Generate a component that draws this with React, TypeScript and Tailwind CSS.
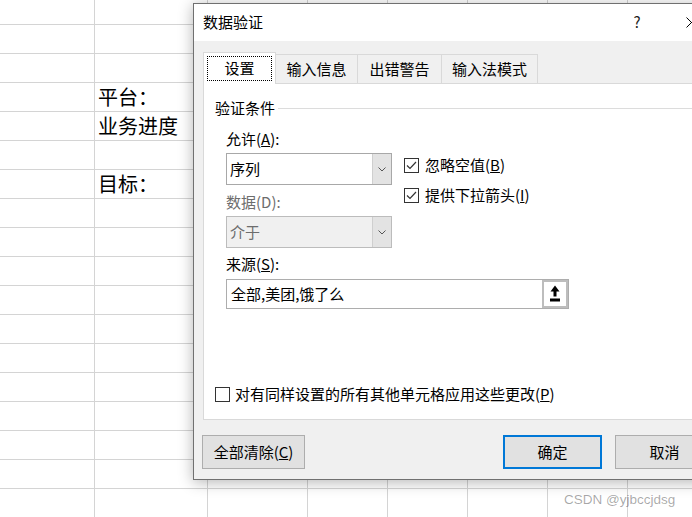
import type { ReactNode } from "react";

const CJK = "font-['Noto_Sans_CJK_SC','Noto_Sans',sans-serif]";

const COLS = ["w-[95px]", "w-[113px]", "w-[100px]", "w-[80px]", "w-[80px]", "w-[80px]", "w-[80px]", "w-[80px]"];
const CELLS: Record<string, string> = { "3-1": "平台：", "4-1": "业务进度", "6-1": "目标：" };

function Sheet() {
  return (
    <div className="flex flex-col">
      {Array.from({ length: 18 }, (_, r) => (
        <div key={r} className={`flex ${r === 0 ? "h-[25px]" : "h-[29px]"}`}>
          {COLS.map((w, c) => (
            <div
              key={c}
              className={`${w} flex shrink-0 items-center border-r border-b border-[#d4d4d4] pl-[3px] text-[20px] leading-none text-black`}
            >
              {CELLS[`${r}-${c}`]}
            </div>
          ))}
        </div>
      ))}
    </div>
  );
}

function Check({ checked }: { checked?: boolean }) {
  return (
    <span className="flex h-[15px] w-[15px] shrink-0 items-center justify-center border border-[#333] bg-white">
      {checked && (
        <svg width="11" height="9" viewBox="0 0 11 9">
          <path d="M1 4.5 L4 7.5 L10 1" fill="none" stroke="#333" strokeWidth="1.2" />
        </svg>
      )}
    </span>
  );
}

function Chevron() {
  return (
    <svg width="8" height="5" viewBox="0 0 8 5">
      <path d="M0.5 0.5 L4 4 L7.5 0.5" fill="none" stroke="#555" strokeWidth="1" />
    </svg>
  );
}

function Combo({ value, disabled }: { value: string; disabled?: boolean }) {
  return (
    <div
      className={`flex h-[32px] w-[166px] border ${
        disabled ? "border-[#bcbcbc] bg-[#f0f0f0] text-[#6d6d6d]" : "border-[#a8a8a8] bg-white text-black"
      }`}
    >
      <span className="flex flex-1 items-center pl-[3px]">{value}</span>
      <span className="flex w-[19px] items-center justify-center border-l border-[#cfcfcf] bg-[#e3e3e3]">
        <Chevron />
      </span>
    </div>
  );
}

function Label({ children, muted }: { children: ReactNode; muted?: boolean }) {
  return <div className={`h-[20px] leading-[20px] ${muted ? "text-[#6d6d6d]" : "text-black"}`}>{children}</div>;
}

function Btn({ children, primary, w }: { children: ReactNode; primary?: boolean; w: string }) {
  return (
    <button
      type="button"
      className={`${w} h-[34px] shrink-0 bg-[#e1e1e1] text-black ${
        primary ? "border-2 border-[#0078d7]" : "border border-[#adadad]"
      }`}
    >
      {children}
    </button>
  );
}

function Dialog() {
  return (
    <div className="absolute left-[193px] top-[3px] flex h-[477px] w-[530px] flex-col border border-[#707070] bg-[#f0f0f0] text-[15px] shadow-[0_2px_14px_rgba(0,0,0,0.3)]">
      {/* title bar */}
      <div className="flex h-[37px] shrink-0 items-center bg-white pl-[9px]">
        <span className="text-black">数据验证</span>
        <div className="ml-auto mr-[8px] flex items-center gap-[8px]">
          <span className="w-[46px] text-center text-[#222]">?</span>
          <span className="flex w-[46px] justify-center">
            <svg width="11" height="11" viewBox="0 0 11 11">
              <path d="M0.5 0.5 L10.5 10.5 M10.5 0.5 L0.5 10.5" stroke="#000" strokeWidth="1" />
            </svg>
          </span>
        </div>
      </div>

      {/* tabs */}
      <div className="mt-[11px] flex h-[31px] items-end pl-[9px]">
        <div className="relative z-10 -mb-px flex h-[32px] w-[73px] items-center justify-center border-x border-t border-[#d9d9d9] bg-white">
          <span className="absolute inset-x-[3px] top-[3px] bottom-[3px] border border-dotted border-black" />
          设置
        </div>
        <div className="flex h-[29px] w-[82px] items-center justify-center border-t border-r border-[#d9d9d9]">输入信息</div>
        <div className="flex h-[29px] w-[84px] items-center justify-center border-t border-r border-[#d9d9d9]">出错警告</div>
        <div className="flex h-[29px] w-[96px] items-center justify-center border-t border-r border-[#d9d9d9]">输入法模式</div>
      </div>

      {/* panel */}
      <div className="mx-[9px] flex h-[337px] shrink-0 flex-col border border-[#d9d9d9] bg-white">
        <div className="flex items-center pl-[11px] pt-[14px]">
          <span className="leading-[20px] text-black">验证条件</span>
          <span className="ml-[3px] h-px flex-1 bg-[#dcdcdc]" />
        </div>

        <div className="mt-[11px] pl-[22px]">
          <Label>
            允许(<u>A</u>):
          </Label>
          <div className="mt-[4px] flex">
            <div className="flex w-[166px] flex-col">
              <Combo value="序列" />
              <div className="mt-[7px]">
                <Label muted>数据(D):</Label>
              </div>
              <div className="mt-[4px]">
                <Combo value="介于" disabled />
              </div>
            </div>
            <div className="ml-[12px] flex flex-col gap-[10px] pt-[2px]">
              <div className="flex h-[20px] items-center gap-[6px] text-black">
                <Check checked />
                <span>
                  忽略空值(<u>B</u>)
                </span>
              </div>
              <div className="flex h-[20px] items-center gap-[6px] text-black">
                <Check checked />
                <span>
                  提供下拉箭头(<u>I</u>)
                </span>
              </div>
            </div>
          </div>
          <div className="mt-[6px]">
            <Label>
              来源(<u>S</u>):
            </Label>
          </div>
          <div className="mt-[5px] flex h-[30px] w-[343px] border border-[#adadad] bg-white">
            <span className="flex flex-1 items-center pl-[4px] text-black">全部,美团,饿了么</span>
            <span className="flex w-[26px] items-center justify-center border-2 border-[#bdbdbd] bg-white">
              <svg width="12" height="18" viewBox="0 0 12 18">
                <path d="M6 0.5 L1.5 6.5 L10.5 6.5 Z" fill="#000" />
                <rect x="4.5" y="6" width="3" height="5.5" fill="#000" />
                <rect x="1" y="13.5" width="10" height="3" fill="#000" />
              </svg>
            </span>
          </div>
        </div>

        <div className="mt-[75px] flex h-[20px] items-center gap-[5px] pl-[11px] text-black">
          <Check />
          <span>
            对有同样设置的所有其他单元格应用这些更改(<u>P</u>)
          </span>
        </div>
      </div>

      {/* buttons */}
      <div className="mt-[15px] flex pl-[8px]">
        <Btn w="w-[103px]">
          全部清除(<u>C</u>)
        </Btn>
        <div className="ml-[198px]">
          <Btn w="w-[99px]" primary>
            确定
          </Btn>
        </div>
        <div className="ml-[13px]">
          <Btn w="w-[99px]">取消</Btn>
        </div>
      </div>
    </div>
  );
}

export default function App() {
  return (
    <div className={`relative h-[517px] w-[692px] overflow-hidden bg-white ${CJK}`}>
      <Sheet />
      <Dialog />
      <span className="absolute left-[564px] top-[490px] font-['Liberation_Sans',Arial,sans-serif] text-[13.5px] text-[rgba(0,0,0,0.35)]">
        CSDN @yjbccjdsg
      </span>
    </div>
  );
}
